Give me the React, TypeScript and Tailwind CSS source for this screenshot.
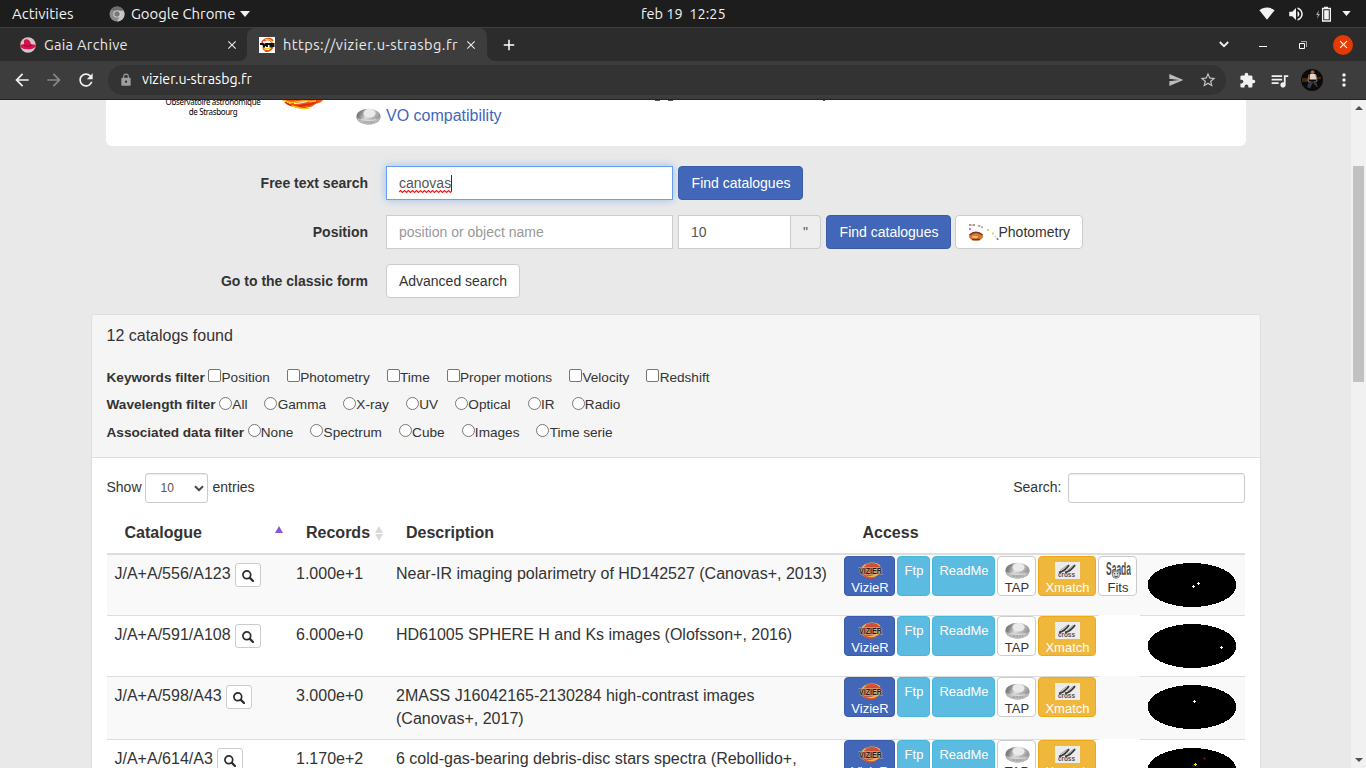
import React from 'react';
import { MdSend, MdStarBorder, MdExtension, MdQueueMusic, MdArrowBack, MdArrowForward, MdRefresh, MdLock, MdMoreVert, MdClose, MdAdd, MdVolumeUp } from 'react-icons/md';

function VizierIcon({ className }: { className: string }) {
  return (
    <svg viewBox="0 0 25 17" preserveAspectRatio="none" className={className}>
      <ellipse cx="13" cy="8.5" rx="10" ry="7.300" fill="#a8604a" />
      <path d="M4 6C8 0 18 0 22 4M5 13c6 4 14 2 17-4M8 14.500c5 1 10-1 13-5" fill="none" stroke="#f2b04a" strokeWidth="1.400" />
      <path d="M8 2.500c7-2 12 0 14 4M5 12c3 4 9 5 13 3M9 5c4-2 8-1 10 1" fill="none" stroke="#e2452a" strokeWidth="1.300" />
      <text x="1" y="12" fontSize="8.500" fontWeight="700" fontFamily="Liberation Sans, sans-serif" textLength="23" lengthAdjust="spacingAndGlyphs" fill="#1d1a22" stroke="#e3bd8a" strokeWidth="1" paintOrder="stroke">VIZIER</text>
    </svg>
  );
}

function Disc({ id, className }: { id: string; className: string }) {
  return (
    <svg viewBox="0 0 25 17" className={className}>
      <defs>
        <linearGradient id={id} x1="0" x2="1" y1="0" y2=".3">
          <stop offset="0" stopColor="#666" />
          <stop offset=".25" stopColor="#888" />
          <stop offset=".5" stopColor="#ddd" />
          <stop offset="1" stopColor="#999" />
        </linearGradient>
      </defs>
      <ellipse cx="12.5" cy="8.7" rx="12.1" ry="8" fill={`url(#${id})`} />
      <path d="M1 10c5 2.500 18 2.500 23 0-1 4.500-6 6.500-11.500 6.500S2 14.500 1 10z" fill="#b9b9b9" />
      <ellipse cx="13.500" cy="5.300" rx="6" ry="4.300" fill="#eaeaea" />
      <path d="M5 11.500c4 1.500 11 1.500 15 0" stroke="#d9d9d9" strokeWidth="1.200" fill="none" />
      <path d="M8 14h10" stroke="#999" strokeDasharray="2 1" />
    </svg>
  );
}

function XmatchIcon() {
  return (
    <svg viewBox="0 0 25 17" className="block h-[17px] w-[25px] bg-[#ececec]">
      <path d="M4 10.500C8 9.500 12 6 14 3M10 10.500C14 9.500 18 6 20 3" fill="none" stroke="#3a3a3a" strokeWidth="1.900" />
      <path d="M5 8.500L12 3.500M12 8.500L18 3.500" stroke="#999" strokeWidth=".9" />
      <text x="3" y="15.300" fontSize="6.500" fontWeight="700" fontFamily="Liberation Sans, sans-serif" textLength="17" fill="#555">cross</text>
    </svg>
  );
}

function SaadaIcon() {
  return (
    <svg viewBox="0 0 25 17" className="block h-[17px] w-[25px]">
      <text x="0" y="13" fontSize="18" fontWeight="700" fontFamily="Liberation Sans, sans-serif" textLength="25" lengthAdjust="spacingAndGlyphs" fill="#505050">Saada</text>
      <circle cx="10" cy="12.600" r="3.700" fill="#d4d4d4" stroke="#777" strokeWidth=".9" />
      <path d="M8 11.600h1M11 11.600h1M8.300 14c1 1 2.500 1 3.500 0" fill="none" stroke="#333" strokeWidth="1" />
    </svg>
  );
}

function SearchGlyph() {
  return (
    <svg viewBox="0 0 12 12" className="size-[12px]">
      <circle cx="4.800" cy="4.800" r="3.900" fill="none" stroke="#2b2b2b" strokeWidth="1.700" />
      <path d="M7.900 7.900L11 11" stroke="#2b2b2b" strokeWidth="2.200" strokeLinecap="round" />
    </svg>
  );
}

function TopBar() {
  return (
    <div className="flex h-[27px] shrink-0 items-center bg-[#1d1d1d] text-[14px] text-[#f2f2f2]">
      <div className="w-[109px] pl-3 pt-px"><span className="text-[15px]">Activities</span></div>
      <svg viewBox="0 0 16 16" className="size-4">
        <circle cx="8" cy="8" r="7.500" fill="#8a8a8a" />
        <path d="M8 4.500h6.700A7.500 7.500 0 0 1 8 15.500l3-5.500z" fill="#c4c4c4" />
        <path d="M1.500 4.300A7.500 7.500 0 0 1 14.700 4.500H8z" fill="#6d6d6d" />
        <circle cx="8" cy="8" r="3.600" fill="#ddd" />
        <circle cx="8" cy="8" r="2.700" fill="#777" />
      </svg>
      <span className="ml-[6px] w-[109px] whitespace-nowrap pt-px text-[14.900px]">Google Chrome</span>
      <svg viewBox="0 0 10 6" className="h-[6px] w-[10px]"><path d="M0 0h10L5 6z" fill="#f2f2f2" /></svg>
      <span className="ml-[391px] w-[88px] whitespace-pre text-[14.500px]">feb 19  12:25</span>
      <div className="ml-auto flex items-center pr-[15px]">
        <svg viewBox="0 0 16 13" className="mr-[12px] h-[13px] w-4"><path d="M.4 3.300C4.500-.4 11.500-.4 15.600 3.300L8 12.700z" fill="#f2f2f2" /></svg>
        <MdVolumeUp className="mr-[11px] size-[18px]" />
        <svg viewBox="0 0 15 16" className="mr-[11px] h-4 w-[15px]">
          <path d="M3 4L0 9h2l-1 4 3-5H2.200z" fill="#aaa" />
          <path d="M8 1.500h4M6.600 2.500h7.800v12.500H6.600z" fill="none" stroke="#f2f2f2" strokeWidth="1.300" />
          <path d="M8.200 4.200h4.600v9.200H8.200z" fill="#f2f2f2" />
        </svg>
        <svg viewBox="0 0 10 6" className="h-[5px] w-[9px]"><path d="M0 0h10L5 6z" fill="#f2f2f2" /></svg>
      </div>
    </div>
  );
}

function TabStrip() {
  return (
    <div className="flex h-[34px] shrink-0 border-t border-[#3f3f3f] bg-[#2c2c2c] text-[14px] text-[#e8e8e8]">
      <div className="flex w-[247px] items-center pl-[20px]">
        <svg viewBox="0 0 16 16" className="size-4">
          <circle cx="8" cy="8" r="7.800" fill="#cfc5ca" />
          <path d="M4 3.500C6 1 10 2 11 7l5 1c-1 4-6 5-10 4-4 0-6-2-6-4l4-1z" fill="#d8104e" />
          <path d="M4 8c3 2 6 1.500 8 0" stroke="#8d0b35" fill="none" />
        </svg>
        <span className="ml-2 w-[181px] text-[14.600px] tracking-[0.300px]">Gaia Archive</span>
        <MdClose className="size-[14px]" />
      </div>
      <div className="relative flex w-[240px] items-center rounded-t-[8px] bg-[#3d3d3d] pl-[12px]">
        <svg viewBox="0 0 8 8" className="absolute -left-2 bottom-0 size-2"><path d="M8 0v8H0a8 8 0 0 0 8-8z" fill="#3d3d3d" /></svg>
        <svg viewBox="0 0 8 8" className="absolute -right-2 bottom-0 size-2"><path d="M0 0v8h8a8 8 0 0 1-8-8z" fill="#3d3d3d" /></svg>
        <svg viewBox="0 0 16 16" className="size-4 bg-white">
          <path d="M3 6C4 1 12 0 14 4M4 11c2 4 9 4 10-2M5 4c4-3 7-1 8 2M6 14c4 1 6-1 7-4" fill="none" stroke="#e8491b" strokeWidth="1.500" />
          <path d="M6 2.500c4-1 7 1 8 5M3 10l4 3M6 11.500h6" fill="none" stroke="#f6cf20" strokeWidth="1.200" />
          <path d="M1 7h3l1 2.500L6.500 7h8v2h-3v1.500M8 7v3" fill="none" stroke="#111" strokeWidth="2" />
        </svg>
        <span className="ml-2 w-[181px] whitespace-nowrap text-[14.600px] tracking-[0.480px]">https://vizier.u-strasbg.fr</span>
        <MdClose className="size-[14px]" />
      </div>
      <div className="flex items-center pl-[13px]"><MdAdd className="size-[18px] text-white" /></div>
      <div className="ml-auto flex items-center pr-[13px]">
        <svg viewBox="0 0 10 7" className="mr-[30px] h-[7px] w-[10px]"><path d="M.8 1L5 5.200 9.200 1" fill="none" stroke="#eee" strokeWidth="1.900" /></svg>
        <div className="mr-8 mt-[4px] h-px w-2 bg-white" />
        <svg viewBox="0 0 8 8" className="mr-[26px] size-2"><path d="M.5 2.500h5v5h-5z" fill="none" stroke="#fff" /><path d="M2 .5h5.500V6" fill="none" stroke="#aaa" /></svg>
        <div className="flex size-5 items-center justify-center rounded-full bg-[#e43b05]"><MdClose className="size-[13px] text-white" /></div>
      </div>
    </div>
  );
}

function Toolbar() {
  return (
    <div className="flex h-[39px] shrink-0 items-center border-b border-[#222] bg-[#3d3d3d] pl-[12px] text-[#f1f1f1]">
      <MdArrowBack className="size-5" />
      <MdArrowForward className="ml-3 size-5 text-[#888]" />
      <MdRefresh className="ml-3 size-5" />
      <div className="ml-3 flex h-[30px] w-[1118px] items-center rounded-full bg-[#333] pl-[11px] text-[14px]">
        <MdLock className="size-[14px] text-[#9aa0a6]" />
        <span className="ml-[9px] text-[14.200px] text-white">vizier.u-strasbg.fr</span>
        <MdSend className="ml-auto size-4 text-[#bdbdbd]" />
        <MdStarBorder className="ml-[15px] mr-[9px] size-[18px] text-[#c4c4c4]" />
      </div>
      <MdExtension className="ml-[13px] size-[17px]" />
      <MdQueueMusic className="ml-[13px] size-[21px]" />
      <svg viewBox="0 0 22 22" className="ml-[11px] size-[22px]">
        <circle cx="11" cy="11" r="11" fill="#0d0b09" />
        <path d="M1 9h7v4H1zM14 8h6v2h-6z" fill="#3b2b18" />
        <circle cx="11.500" cy="3.200" r="1.900" fill="#9a6a4c" />
        <path d="M9 5h5.500l1 5.500h-7z" fill="#ded5cf" />
        <path d="M8 5.500L7 12l3 1M15 6l1 6-3 1" stroke="#a9714f" fill="none" />
        <path d="M6 18l2-5.500h7l2 6-3-2-2-3-3 6z" fill="#343849" />
      </svg>
      <MdMoreVert className="ml-[11px] size-[20px]" />
    </div>
  );
}

const blueButton = 'flex h-[34px] w-[125px] items-center justify-center rounded-[4px] border border-[#3b5ca9] bg-[#4267b9] pl-px text-[14px] text-white';

function SearchForm() {
  return (
    <div className="flex flex-col gap-[15px] pt-5 text-[14px]">
      <div className="flex h-[34px] items-center">
        <div className="w-[368px] text-right font-bold">Free text search</div>
        <div className="ml-[18px] flex h-[34px] w-[287px] items-center border border-[#66a0ee] bg-white pl-[12px] text-[#555] shadow-[0_0_8px_rgba(102,160,238,0.600)]">
          <span className="relative">
            canovas
            <svg viewBox="0 0 53 3" className="absolute bottom-[1px] left-0 h-[3px] w-[53px]"><path d="M0 2l1.500-1.500L3.500 2.500l2-2 2 2 2-2 2 2 2-2 2 2 2-2 2 2 2-2 2 2 2-2 2 2 2-2 2 2 2-2 2 2 2-2 2 2 2-2 2 2 2-2 2 2 2-2 2 2 2-2 1.500 1.500" fill="none" stroke="#f21818" strokeWidth="1.100" /></svg>
          </span>
          <span className="h-4 w-px bg-[#333]" />
        </div>
        <button className={`ml-[5px] ${blueButton}`}>Find catalogues</button>
      </div>
      <div className="flex h-[34px] items-center">
        <div className="w-[368px] text-right font-bold">Position</div>
        <div className="ml-[18px] flex h-[34px] w-[287px] items-center border border-[#ccc] bg-white pl-[12px] text-[#999]">position or object name</div>
        <div className="ml-[5px] flex h-[34px] w-[113px] items-center border border-[#ccc] bg-white pl-[12px] text-[#555]">10</div>
        <div className="flex h-[34px] w-[30px] items-center justify-center rounded-r-[4px] border border-l-0 border-[#ccc] bg-[#eee] text-[#555]">"</div>
        <button className={`ml-[5px] ${blueButton}`}>Find catalogues</button>
        <button className="ml-[4px] flex h-[34px] w-[128px] items-center rounded-[4px] border border-[#ccc] bg-white pl-[11.500px]">
          <svg viewBox="0 0 31 18" className="h-[18px] w-[31px] shrink-0">
            <path d="M1 2h7M10 2.500l5 2" fill="none" stroke="#b09a90" strokeWidth="1.800" strokeDasharray="2.500 1" />
            <ellipse cx="8" cy="13.500" rx="7" ry="4.200" fill="#d9772e" />
            <path d="M1.500 12c4-3.500 9-3.500 13 0M4 16.500h8" stroke="#7a3522" strokeWidth="1.600" fill="none" />
            <ellipse cx="7" cy="14" rx="3" ry="1.200" fill="#f0b566" />
            <path d="M1 6h2" stroke="#ef66b6" strokeWidth="2" />
            <path d="M19 7h2M24 10.500h2" stroke="#c3dd70" strokeWidth="2" />
            <path d="M27 13l1 1" stroke="#ecc260" strokeWidth="1.500" />
            <path d="M29 15l1 2" stroke="#527da6" strokeWidth="1.500" />
          </svg>
          Photometry
        </button>
      </div>
      <div className="flex h-[34px] items-center">
        <div className="w-[368px] text-right font-bold">Go to the classic form</div>
        <button className="ml-[18px] h-[34px] w-[134px] rounded-[4px] border border-[#ccc] bg-white">Advanced search</button>
      </div>
    </div>
  );
}

function FilterRow({ title, items, round = false }: { title: string; items: string[]; round?: boolean }) {
  return (
    <div className="flex h-[18px] items-center text-[13.600px]">
      <b className="mr-[3.500px]">{title}</b>
      <div className="flex gap-[17px]">
        {items.map((item) => (
          <label key={item} className="flex items-center">
            <span className={`mb-[5px] mr-[0.300px] size-[13px] border border-[#767676] bg-white ${round ? 'rounded-full' : 'rounded-[2px]'}`} />
            {item}
          </label>
        ))}
      </div>
    </div>
  );
}

const smallButton = 'flex h-10 shrink-0 flex-col items-center rounded-[4px] border pl-px pt-[5px] text-[13px] leading-[18px]';

type RowData = {
  name: string;
  records: string;
  lines: string[];
  fits?: boolean;
  marks: { x: number; y: number; color: string }[];
};

const rows: RowData[] = [
  { name: 'J/A+A/556/A123', records: '1.000e+1', lines: ['Near-IR imaging polarimetry of HD142527 (Canovas+, 2013)'], fits: true, marks: [{ x: 45, y: 23, color: '#fff' }, { x: 50, y: 20, color: '#fff' }] },
  { name: 'J/A+A/591/A108', records: '6.000e+0', lines: ['HD61005 SPHERE H and Ks images (Olofsson+, 2016)'], marks: [{ x: 73, y: 23, color: '#fff' }] },
  { name: 'J/A+A/598/A43', records: '3.000e+0', lines: ['2MASS J16042165-2130284 high-contrast images', '(Canovas+, 2017)'], marks: [{ x: 46, y: 16, color: '#fff' }] },
  { name: 'J/A+A/614/A3', records: '1.170e+2', lines: ['6 cold-gas-bearing debris-disc stars spectra (Rebollido+,'], marks: [{ x: 56, y: 10, color: '#7a0000' }, { x: 45, y: 17, color: '#7a0000' }, { x: 47, y: 16, color: '#ffd61f' }] },
];

const rowHeights = ['h-[60px]', 'h-[61px]', 'h-[63px]', 'h-[63px]'];

function CatalogRow({ row, index }: { row: RowData; index: number }) {
  const line = index > 0 ? 'border-t border-[#ddd]' : '';
  return (
    <div className={`flex shrink-0 text-[16px] leading-[22.860px] ${rowHeights[index]} ${index % 2 === 0 ? 'bg-[#f9f9f9]' : 'bg-white'}`}>
      <div className={`flex w-[181px] items-start pl-[7.500px] pt-[8px] ${line}`}>
        <span>{row.name}</span>
        <button className="ml-[4px] flex h-6 w-[26px] items-center justify-center rounded-[3px] border border-[#ccc] bg-white pt-px"><SearchGlyph /></button>
      </div>
      <div className={`w-[100px] pl-2 pt-[8px] ${line}`}>{row.records}</div>
      <div className={`w-[456px] whitespace-nowrap pl-2 pt-[8px] ${line}`}>
        {row.lines.map((text) => <div key={text}>{text}</div>)}
      </div>
      <div className={`flex items-start gap-[2px] ${row.fits ? 'w-[296px] pt-px' : `w-[255px] mr-[41px] ${line}`}`}>
        <button className={`${smallButton} w-[51px] border-[#3b5ca9] bg-[#4267b9] text-white`}><VizierIcon className="block h-[17px] w-[25px] shrink-0" />VizieR</button>
        <button className={`${smallButton} w-[33px] border-[#46b8da] bg-[#5bbbe0] text-white`}>Ftp</button>
        <button className={`${smallButton} w-[63px] border-[#46b8da] bg-[#5bbbe0] text-white`}>ReadMe</button>
        <button className={`${smallButton} w-[39px] border-[#ccc] bg-white`}><Disc id={`tap-${index}`} className="block h-[17px] w-[25px] shrink-0" />TAP</button>
        <button className={`${smallButton} w-[58px] border-[#eea913] bg-[#f0b73d] text-white`}><div className="shrink-0"><XmatchIcon /></div>Xmatch</button>
        {row.fits && <button className={`${smallButton} w-[39px] border-[#ccc] bg-white`}><div className="shrink-0"><SaadaIcon /></div>Fits</button>}
      </div>
      <div className={`w-[105px] pl-2 pt-[8px] ${line}`}>
        <svg viewBox="0 0 88 44" className="block h-11 w-[88px]" shapeRendering="crispEdges">
          <ellipse cx="44" cy="22" rx="44.500" ry="22" fill="#000" />
          {row.marks.map((m) => (
            <path key={`${m.x}-${m.y}`} d={`M${m.x - 1} ${m.y + 0.5}h3M${m.x + 0.5} ${m.y - 1}v3`} stroke={m.color} strokeWidth="1" />
          ))}
        </svg>
      </div>
    </div>
  );
}

function Results() {
  return (
    <div className="ml-[91px] mt-4 w-[1170px] rounded-[4px] border border-[#ddd] bg-white">
      <div className="h-[143px] rounded-t-[3px] border-b border-[#ddd] bg-[#f5f5f5] px-[14.500px] pt-[11px]">
        <div className="text-[16px] leading-[20px]">12 catalogs found</div>
        <div className="mt-[23px] flex flex-col gap-[9.500px]">
          <FilterRow title="Keywords filter" items={['Position', 'Photometry', 'Time', 'Proper motions', 'Velocity', 'Redshift']} />
          <FilterRow title="Wavelength filter" items={['All', 'Gamma', 'X-ray', 'UV', 'Optical', 'IR', 'Radio']} round />
          <FilterRow title="Associated data filter" items={['None', 'Spectrum', 'Cube', 'Images', 'Time serie']} round />
        </div>
      </div>
      <div className="px-[15px] pt-[15px]">
        <div className="flex h-[30px] items-center text-[14px]">
          <span className="-mt-px -ml-[0.500px]">Show</span>
          <div className="ml-[3.500px] flex h-[30px] w-[63px] items-center rounded-[3px] border border-[#ccc] pl-[14.500px] pr-[3px] text-[12px] text-[#555] shadow-[inset_0_1px_1px_rgba(0,0,0,0.080)]">
            10
            <svg viewBox="0 0 10 7" className="ml-auto h-[7px] w-[10px]"><path d="M1 1.200l4 4 4-4" fill="none" stroke="#444" strokeWidth="2" /></svg>
          </div>
          <span className="-mt-px ml-[4.500px]">entries</span>
          <span className="-mt-px ml-auto">Search:</span>
          <div className="ml-[6.500px] h-[30px] w-[177px] rounded-[3px] border border-[#ccc] shadow-[inset_0_1px_1px_rgba(0,0,0,0.080)]" />
        </div>
        <div className="mt-[8px] flex h-[44px] border-b-2 border-[#ddd] pt-[10px] text-[16px] font-bold leading-[23px]">
          <div className="flex w-[181px] pl-[17.500px]">
            Catalogue
            <svg viewBox="0 0 8 7" className="ml-auto mr-[5.500px] mt-[5px] h-[7px] w-2"><path d="M4 0l4 7H0z" fill="#8756dc" /></svg>
          </div>
          <div className="flex w-[100px] pl-[18px]">
            Records
            <svg viewBox="0 0 8 15" className="ml-[4.500px] mt-[5px] h-[15px] w-2"><path d="M4 0l4 7H0zM0 8h8l-4 7z" fill="#d9d9d9" /></svg>
          </div>
          <div className="w-[456px] pl-[18px]">Description</div>
          <div className="pl-[18.500px]">Access</div>
        </div>
        {rows.map((row, i) => <CatalogRow key={row.name} row={row} index={i} />)}
      </div>
    </div>
  );
}

function PageHeader() {
  return (
    <div className="relative ml-[106px] h-[46px] w-[1140px] overflow-hidden rounded-b-[6px] bg-white">
      <div className="absolute left-[55px] top-[-3px] w-[104px] whitespace-nowrap text-center font-['Noto_Sans',sans-serif] text-[8px] leading-[10px] tracking-[-0.360px] text-black">
        <div>Observatoire astronomique</div>
        <div>de Strasbourg</div>
      </div>
      <svg viewBox="0 0 44 10" className="absolute left-[176px] top-0 h-[10px] w-11">
        <path d="M0 0h41c-3 4-7 3-9 5-4 4-7 1-9 2-6 2-12 0-15-4z" fill="#ed5a0b" />
        <path d="M3 2c4 3 10 6 18 3 5 0 10-1 14-4M9 5c7 4 10 1 16 3" fill="none" stroke="#df2a0b" strokeWidth="1.800" />
        <path d="M1 0c7 4 13 2 20 1 5 0 9 1 13 0M9 6c6 0 9 4 18 2" fill="none" stroke="#ffc313" strokeWidth="1.500" />
        <path d="M12 3.500c5 0 9-1 13-2" stroke="#fff" strokeWidth="1" fill="none" />
      </svg>
      <svg viewBox="0 0 640 2" className="absolute left-[250px] top-0 h-[2px] w-[640px]">
        <path d="M299 .5h5M312 .5h5M467 .5h2" stroke="#555" strokeWidth="1" />
      </svg>
      <div className="absolute left-[250px] top-[6px] flex items-center text-[16px] leading-[20px] text-[#4267b9]">
        <Disc id="vo" className="mt-[1px] h-[17px] w-[25px]" />
        <span className="ml-[5px]">VO compatibility</span>
      </div>
    </div>
  );
}

export default function App() {
  return (
    <div className="flex h-[768px] w-[1366px] flex-col overflow-hidden bg-[#e9e9e9] font-['Liberation_Sans',Arial,sans-serif] text-[#333]">
      <header className="shrink-0 font-['Ubuntu','Noto_Sans',sans-serif]">
        <TopBar />
        <TabStrip />
        <Toolbar />
      </header>
      <div className="flex h-[668px] shrink-0 overflow-hidden">
        <main className="w-[1351px] overflow-hidden">
          <PageHeader />
          <SearchForm />
          <Results />
        </main>
        <div className="flex w-[15px] flex-col items-center bg-[#f1f1f1] pt-[6px]">
          <svg viewBox="0 0 8 4" className="h-1 w-2"><path d="M4 0l4 4H0z" fill="#505050" /></svg>
          <div className="mt-[56px] h-[216px] w-[11px] bg-[#c1c1c1]" />
          <svg viewBox="0 0 8 4" className="mb-[6px] mt-auto h-1 w-2"><path d="M0 0h8L4 4z" fill="#505050" /></svg>
        </div>
      </div>
    </div>
  );
}
